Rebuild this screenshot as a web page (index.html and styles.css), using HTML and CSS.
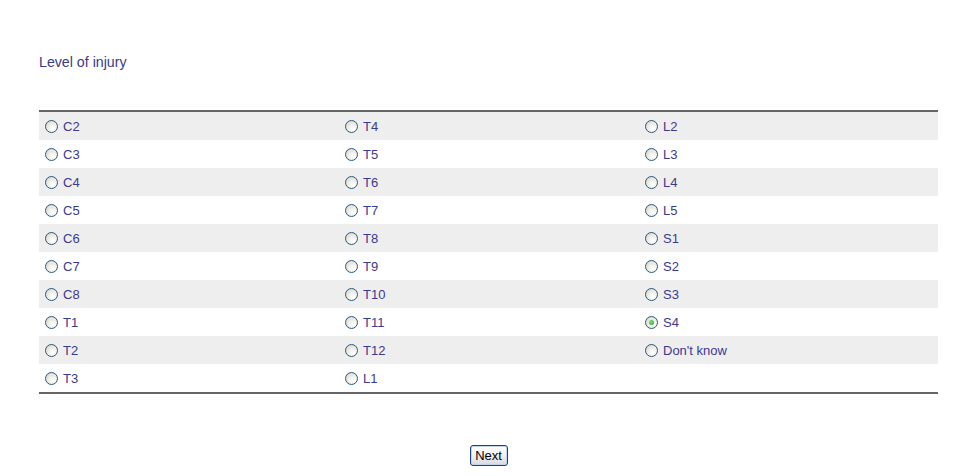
FILE: index.html
```html
<!DOCTYPE html>
<html>
<head>
<meta charset="utf-8">
<link rel="stylesheet" href="styles.css">
</head>
<body>
<div class="page">
  <div class="question">Level of injury</div>
  <div class="grid">
    <label class="opt shade"><input type="radio" name="l"><span>C2</span></label>
    <label class="opt shade"><input type="radio" name="l"><span>T4</span></label>
    <label class="opt shade"><input type="radio" name="l"><span>L2</span></label>
    <label class="opt"><input type="radio" name="l"><span>C3</span></label>
    <label class="opt"><input type="radio" name="l"><span>T5</span></label>
    <label class="opt"><input type="radio" name="l"><span>L3</span></label>
    <label class="opt shade"><input type="radio" name="l"><span>C4</span></label>
    <label class="opt shade"><input type="radio" name="l"><span>T6</span></label>
    <label class="opt shade"><input type="radio" name="l"><span>L4</span></label>
    <label class="opt"><input type="radio" name="l"><span>C5</span></label>
    <label class="opt"><input type="radio" name="l"><span>T7</span></label>
    <label class="opt"><input type="radio" name="l"><span>L5</span></label>
    <label class="opt shade"><input type="radio" name="l"><span>C6</span></label>
    <label class="opt shade"><input type="radio" name="l"><span>T8</span></label>
    <label class="opt shade"><input type="radio" name="l"><span>S1</span></label>
    <label class="opt"><input type="radio" name="l"><span>C7</span></label>
    <label class="opt"><input type="radio" name="l"><span>T9</span></label>
    <label class="opt"><input type="radio" name="l"><span>S2</span></label>
    <label class="opt shade"><input type="radio" name="l"><span>C8</span></label>
    <label class="opt shade"><input type="radio" name="l"><span>T10</span></label>
    <label class="opt shade"><input type="radio" name="l"><span>S3</span></label>
    <label class="opt"><input type="radio" name="l"><span>T1</span></label>
    <label class="opt"><input type="radio" name="l"><span>T11</span></label>
    <label class="opt"><input type="radio" name="l" checked><span>S4</span></label>
    <label class="opt shade"><input type="radio" name="l"><span>T2</span></label>
    <label class="opt shade"><input type="radio" name="l"><span>T12</span></label>
    <label class="opt shade"><input type="radio" name="l"><span>Don't know</span></label>
    <label class="opt"><input type="radio" name="l"><span>T3</span></label>
    <label class="opt"><input type="radio" name="l"><span>L1</span></label>
    <div class="opt"></div>
  </div>
  <div class="actions">
    <button class="next" type="button">Next</button>
  </div>
</div>
</body>
</html>
```
FILE: styles.css
```css
html, body {
  margin: 0;
  padding: 0;
  background: #fff;
}
body {
  font-family: "Liberation Sans", Arial, sans-serif;
  color: #3a3a8e;
}
.page {
  width: 899px;
  margin-left: 39px;
  padding-top: 54px;
}
.question {
  font-size: 14.2px;
  line-height: 16px;
  height: 56px;
}
.grid {
  display: grid;
  grid-template-columns: 300px 300px 299px;
  border-top: 2px solid #666;
  border-bottom: 2px solid #666;
}
.opt {
  height: 28px;
  display: flex;
  align-items: center;
  padding-left: 6px;
  font-size: 13px;
  gap: 5px;
}
.shade {
  background: #eeeeee;
}
.opt input {
  appearance: none;
  -webkit-appearance: none;
  margin: 0;
  width: 13px;
  height: 13px;
  border-radius: 50%;
  border: 1px solid #2a5a84;
  background: radial-gradient(circle at 65% 70%, #ffffff 0%, #eeeee9 45%, #cfcfc8 100%);
  box-sizing: border-box;
  display: grid;
  place-items: center;
}
.opt input:checked::after {
  content: "";
  width: 5px;
  height: 5px;
  border-radius: 50%;
  background: radial-gradient(circle at 40% 40%, #7fe07f, #21a121);
}
.opt span {
  line-height: 15px;
}
.actions {
  display: flex;
  justify-content: center;
  padding-top: 51px;
}
.next {
  font-family: "Liberation Sans", Arial, sans-serif;
  font-size: 13px;
  color: #000;
  width: 38px;
  height: 21px;
  padding: 0;
  border: 1px solid #1f3f86;
  border-radius: 3px;
  background: linear-gradient(#ffffff 0%, #f0f0ee 50%, #d9dae3 100%);
  box-shadow: inset 0 0 0 1px #c3d3f0;
}
```
